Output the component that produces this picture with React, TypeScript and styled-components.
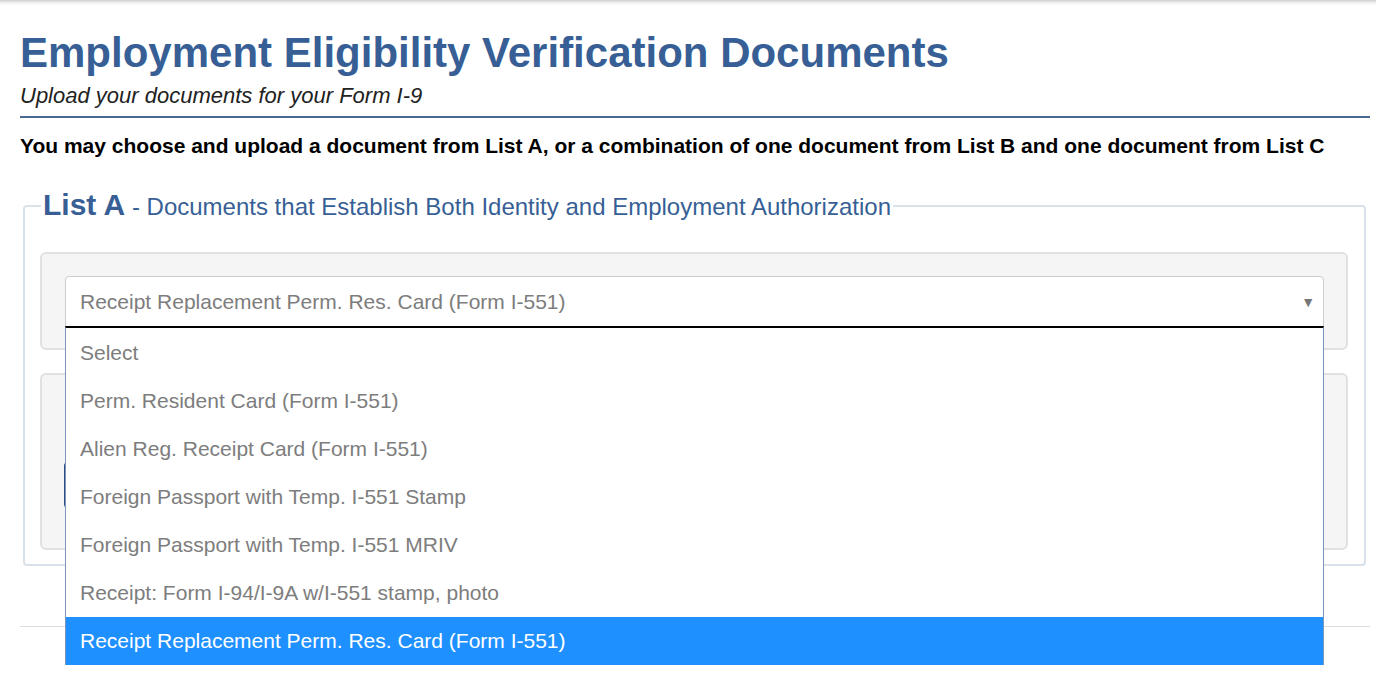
import styled, { createGlobalStyle } from 'styled-components';

const GlobalStyle = createGlobalStyle`
  body {
    margin: 0;
    min-height: 100vh;
    background: #fff;
    font-family: "Liberation Sans", Arial, sans-serif;
  }
`;

const TopShadow = styled.div`
  height: 6px;
  background: linear-gradient(#cfcfcf, #f4f4f4 50%, #fff);
`;
const Page = styled.div`
  padding: 0 6px 0 20px;
`;
const Title = styled.h1`
  margin: 23px 0 0;
  font-size: 42px;
  line-height: 48px;
  font-weight: bold;
  color: #375f96;
`;
const Subtitle = styled.p`
  margin: 7px 0 0;
  font-size: 22px;
  line-height: 24px;
  font-style: italic;
  color: #222;
  padding-bottom: 8px;
  border-bottom: 2px solid #4b6890;
`;
const Instructions = styled.p`
  margin: 16px 0 0;
  font-size: 21px;
  line-height: 24px;
  font-weight: bold;
  color: #000;
`;
const Fieldset = styled.fieldset`
  margin: 30px 4px 0 3px;
  padding: 28px 16px 14px 15px;
  border: 2px solid #d9e2eb;
  border-radius: 4px;
`;
const Legend = styled.legend`
  padding: 0 2px;
  margin-left: 1px;
  color: #375f96;
  font-size: 24px;
  line-height: 34px;
`;
const ListName = styled.span`
  font-size: 30px;
  font-weight: bold;
`;
const Panel = styled.div<{ $tall?: boolean }>`
  background: #f5f5f5;
  border: 2px solid #e1e1e1;
  border-radius: 6px;
  padding: ${(p) => (p.$tall ? '50px 22px 40px' : '22px 22px 21px 23px')};
  & + & {
    margin-top: 23px;
  }
`;
const SelectWrap = styled.div`
  position: relative;
`;
const SelectBox = styled.div`
  height: 51px;
  box-sizing: border-box;
  background: #fff;
  border: 1px solid #ccc;
  border-radius: 4px 4px 0 0;
  display: flex;
  align-items: center;
  justify-content: space-between;
  padding: 0 8px 0 14px;
  font-size: 21px;
  color: #7d7d7d;
`;
const Arrow = styled.span`
  font-size: 14px;
  color: #777;
`;
const Options = styled.ul`
  position: absolute;
  left: 0;
  right: 0;
  top: 50px;
  margin: 0;
  padding: 1px 0 0;
  list-style: none;
  background: #fff;
  border-top: 2px solid #000;
  border-left: 1px solid #7b96bd;
  border-right: 1px solid #7b96bd;
  z-index: 10;
`;
const Option = styled.li<{ $active?: boolean }>`
  height: 48px;
  display: flex;
  align-items: center;
  padding-left: 14px;
  font-size: 21px;
  color: ${(p) => (p.$active ? '#fff' : '#7d7d7d')};
  background: ${(p) => (p.$active ? '#1e90ff' : '#fff')};
`;
const FieldLabel = styled.div`
  font-size: 20px;
  line-height: 24px;
  color: #777;
  margin-bottom: 13px;
`;
const UploadButton = styled.button`
  display: block;
  height: 46px;
  padding: 0 20px;
  border: none;
  border-radius: 4px;
  background: #2c4d86;
  color: #fff;
  font-family: inherit;
  font-size: 18px;
`;
const Rule = styled.hr`
  margin: 60px 0 0;
  border: none;
  border-top: 1px solid #ddd;
`;

const options = [
  'Select',
  'Perm. Resident Card (Form I-551)',
  'Alien Reg. Receipt Card (Form I-551)',
  'Foreign Passport with Temp. I-551 Stamp',
  'Foreign Passport with Temp. I-551 MRIV',
  'Receipt: Form I-94/I-9A w/I-551 stamp, photo',
  'Receipt Replacement Perm. Res. Card (Form I-551)',
];

const App = () => {
  const selected = options[6];
  return (
    <>
      <GlobalStyle />
      <TopShadow />
      <Page>
        <Title>Employment Eligibility Verification Documents</Title>
        <Subtitle>Upload your documents for your Form I-9</Subtitle>
        <Instructions>
          You may choose and upload a document from List A, or a combination of one document
          from List B and one document from List C
        </Instructions>
        <Fieldset>
          <Legend>
            <ListName>List A</ListName> - Documents that Establish Both Identity and Employment
            Authorization
          </Legend>
          <Panel>
            <SelectWrap>
              <SelectBox>
                {selected}
                <Arrow>▼</Arrow>
              </SelectBox>
              <Options>
                {options.map((o) => (
                  <Option key={o} $active={o === selected}>
                    {o}
                  </Option>
                ))}
              </Options>
            </SelectWrap>
          </Panel>
          <Panel $tall>
            <FieldLabel>Upload Document</FieldLabel>
            <UploadButton>Choose File</UploadButton>
          </Panel>
        </Fieldset>
        <Rule />
      </Page>
    </>
  );
};

export default App;
